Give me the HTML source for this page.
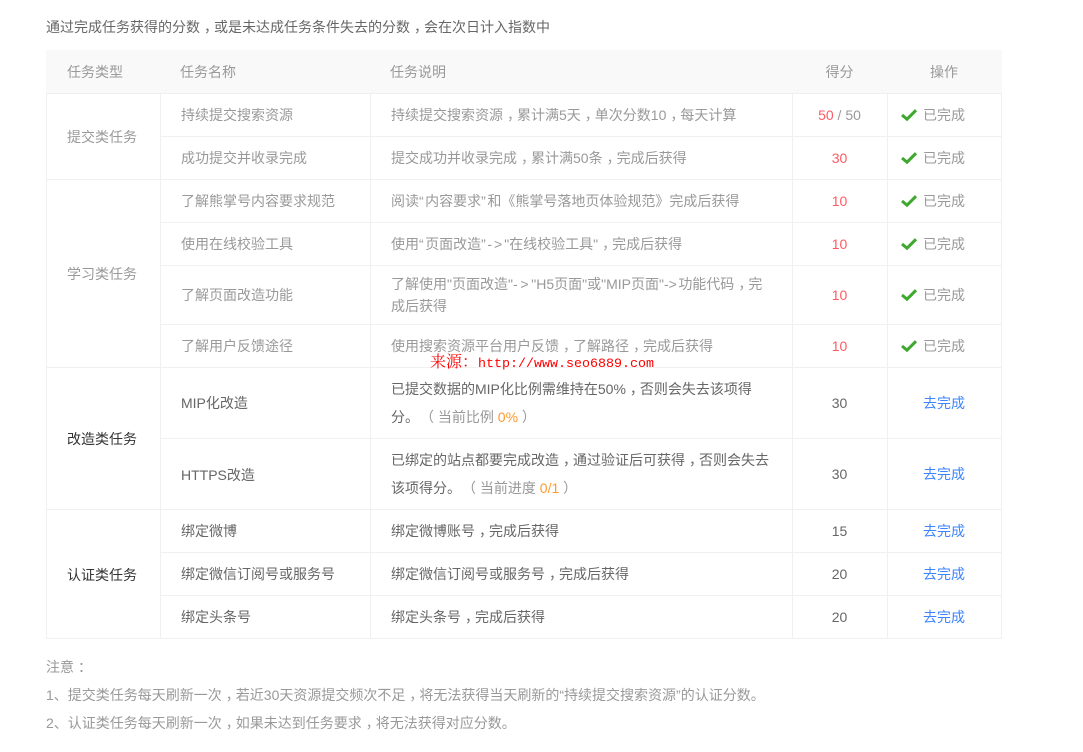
<!DOCTYPE html>
<html lang="zh-CN">
<head>
<meta charset="utf-8">
<title>任务</title>
<style>
html,body{margin:0;padding:0;background:#fff;width:1083px;height:752px;overflow:hidden}
body{position:relative;font-family:"Liberation Sans","Noto Sans CJK SC",sans-serif;font-size:14px;color:#999}
.t{position:absolute;line-height:20px;height:20px;white-space:nowrap}
.c{text-align:center}
.h{position:absolute;height:1px;background:#f0f0f0}
.v{position:absolute;width:1px;background:#f0f0f0}
.d{color:#666}
.k{color:#333}
.r{color:#ff5a64}
.o{color:#ff9a2e}
.b{color:#3d84ff}
.ck{position:absolute;width:16px;height:13px}
u{text-decoration:none;position:relative;left:4px}
.q{letter-spacing:1.5px}
.p{margin-left:8px;color:#999}
.wm{position:absolute;left:430px;top:352px;line-height:18px;color:#f00;white-space:nowrap;font-family:"Liberation Mono","Noto Serif CJK SC",serif;font-size:13.33px}
.wm b{font-weight:400;font-size:16px;font-family:"Noto Serif CJK SC",serif}
</style>
</head>
<body>
<div class="t d" style="left:46px;top:17px">通过完成任务获得的分数<u>，</u>或是未达成任务条件失去的分数<u>，</u>会在次日计入指数中</div>

<div style="position:absolute;left:46px;top:50px;width:956px;height:43px;background:#f9f9f9"></div>
<div class="t" style="left:67px;top:62px">任务类型</div>
<div class="t" style="left:180px;top:62px">任务名称</div>
<div class="t" style="left:390px;top:62px">任务说明</div>
<div class="t c" style="left:792px;width:95px;top:62px">得分</div>
<div class="t c" style="left:887px;width:114px;top:62px">操作</div>

<div class="h" style="left:46px;width:956px;top:93px"></div>
<div class="h" style="left:160px;width:842px;top:136px"></div>
<div class="h" style="left:46px;width:956px;top:179px"></div>
<div class="h" style="left:160px;width:842px;top:222px"></div>
<div class="h" style="left:160px;width:842px;top:265px"></div>
<div class="h" style="left:160px;width:842px;top:324px"></div>
<div class="h" style="left:46px;width:956px;top:367px"></div>
<div class="h" style="left:160px;width:842px;top:438px"></div>
<div class="h" style="left:46px;width:956px;top:509px"></div>
<div class="h" style="left:160px;width:842px;top:552px"></div>
<div class="h" style="left:160px;width:842px;top:595px"></div>
<div class="h" style="left:46px;width:956px;top:638px"></div>
<div class="v" style="left:46px;top:93px;height:546px"></div>
<div class="v" style="left:160px;top:93px;height:546px"></div>
<div class="v" style="left:370px;top:93px;height:546px"></div>
<div class="v" style="left:792px;top:93px;height:546px"></div>
<div class="v" style="left:887px;top:93px;height:546px"></div>
<div class="v" style="left:1001px;top:93px;height:546px"></div>

<div class="t" style="left:67px;top:127px">提交类任务</div>
<div class="t" style="left:67px;top:264px">学习类任务</div>
<div class="t k" style="left:67px;top:429px">改造类任务</div>
<div class="t k" style="left:67px;top:565px">认证类任务</div>

<div class="t" style="left:181px;top:105px">持续提交搜索资源</div>
<div class="t" style="left:181px;top:148px">成功提交并收录完成</div>
<div class="t" style="left:181px;top:191px">了解熊掌号内容要求规范</div>
<div class="t" style="left:181px;top:234px">使用在线校验工具</div>
<div class="t" style="left:181px;top:285px">了解页面改造功能</div>
<div class="t" style="left:181px;top:336px">了解用户反馈途径</div>
<div class="t d" style="left:181px;top:393px">MIP化改造</div>
<div class="t d" style="left:181px;top:465px">HTTPS改造</div>
<div class="t d" style="left:181px;top:521px">绑定微博</div>
<div class="t d" style="left:181px;top:564px">绑定微信订阅号或服务号</div>
<div class="t d" style="left:181px;top:607px">绑定头条号</div>

<div class="t" style="left:391px;top:105px">持续提交搜索资源<u>，</u>累计满5天<u>，</u>单次分数10<u>，</u>每天计算</div>
<div class="t" style="left:391px;top:148px">提交成功并收录完成<u>，</u>累计满50条<u>，</u>完成后获得</div>
<div class="t" style="left:391px;top:191px">阅读<span class="q">“</span>内容要求<span class="q">”</span>和《熊掌号落地页体验规范》完成后获得</div>
<div class="t" style="left:391px;top:234px">使用<span class="q">“</span>页面改造<span class="q">”</span><span style="letter-spacing:2px">-&gt;</span>"在线校验工具"<u>，</u>完成后获得</div>
<div class="t" style="left:391px;top:274px">了解使用"页面改造"<span style="letter-spacing:2.75px">-&gt;</span>"H5页面"或"MIP页面"-<span style="letter-spacing:1.5px">&gt;</span>功能代码<u>，</u>完</div>
<div class="t" style="left:391px;top:296px">成后获得</div>
<div class="t" style="left:391px;top:336px">使用搜索资源平台用户反馈<u>，</u>了解路径<u>，</u>完成后获得</div>
<div class="t d" style="left:391px;top:379px">已提交数据的MIP化比例需维持在50%<u>，</u>否则会失去该项得</div>
<div class="t d" style="left:391px;top:407px">分。<span class="p">（ 当前比例 <span class="o">0%</span> ）</span></div>
<div class="t d" style="left:391px;top:450px">已绑定的站点都要完成改造<u>，</u>通过验证后可获得<u>，</u>否则会失去</div>
<div class="t d" style="left:391px;top:478px">该项得分。<span class="p">（ 当前进度 <span class="o">0/1</span> ）</span></div>
<div class="t d" style="left:391px;top:521px">绑定微博账号<u>，</u>完成后获得</div>
<div class="t d" style="left:391px;top:564px">绑定微信订阅号或服务号<u>，</u>完成后获得</div>
<div class="t d" style="left:391px;top:607px">绑定头条号<u>，</u>完成后获得</div>

<div class="t c" style="left:792px;width:95px;top:105px"><span class="r">50</span> / 50</div>
<div class="t c r" style="left:792px;width:95px;top:148px">30</div>
<div class="t c r" style="left:792px;width:95px;top:191px">10</div>
<div class="t c r" style="left:792px;width:95px;top:234px">10</div>
<div class="t c r" style="left:792px;width:95px;top:285px">10</div>
<div class="t c r" style="left:792px;width:95px;top:336px">10</div>
<div class="t c d" style="left:792px;width:95px;top:393px">30</div>
<div class="t c d" style="left:792px;width:95px;top:464px">30</div>
<div class="t c d" style="left:792px;width:95px;top:521px">15</div>
<div class="t c d" style="left:792px;width:95px;top:564px">20</div>
<div class="t c d" style="left:792px;width:95px;top:607px">20</div>

<svg class="ck" style="left:901px;top:109px" viewBox="0 0 16 13"><path d="M1 6L6 10.2L15 1.2" fill="none" stroke="#3fa82f" stroke-width="3"/></svg>
<svg class="ck" style="left:901px;top:152px" viewBox="0 0 16 13"><path d="M1 6L6 10.2L15 1.2" fill="none" stroke="#3fa82f" stroke-width="3"/></svg>
<svg class="ck" style="left:901px;top:195px" viewBox="0 0 16 13"><path d="M1 6L6 10.2L15 1.2" fill="none" stroke="#3fa82f" stroke-width="3"/></svg>
<svg class="ck" style="left:901px;top:238px" viewBox="0 0 16 13"><path d="M1 6L6 10.2L15 1.2" fill="none" stroke="#3fa82f" stroke-width="3"/></svg>
<svg class="ck" style="left:901px;top:289px" viewBox="0 0 16 13"><path d="M1 6L6 10.2L15 1.2" fill="none" stroke="#3fa82f" stroke-width="3"/></svg>
<svg class="ck" style="left:901px;top:340px" viewBox="0 0 16 13"><path d="M1 6L6 10.2L15 1.2" fill="none" stroke="#3fa82f" stroke-width="3"/></svg>
<div class="t" style="left:923px;top:105px">已完成</div>
<div class="t" style="left:923px;top:148px">已完成</div>
<div class="t" style="left:923px;top:191px">已完成</div>
<div class="t" style="left:923px;top:234px">已完成</div>
<div class="t" style="left:923px;top:285px">已完成</div>
<div class="t" style="left:923px;top:336px">已完成</div>
<div class="t b" style="left:923px;top:393px">去完成</div>
<div class="t b" style="left:923px;top:464px">去完成</div>
<div class="t b" style="left:923px;top:521px">去完成</div>
<div class="t b" style="left:923px;top:564px">去完成</div>
<div class="t b" style="left:923px;top:607px">去完成</div>

<div class="wm"><b>来源：</b>http://www.seo6889.com</div>

<div class="t" style="left:46px;top:657px">注意<u>：</u></div>
<div class="t" style="left:46px;top:685px">1、提交类任务每天刷新一次<u>，</u>若近30天资源提交频次不足<u>，</u>将无法获得当天刷新的“持续提交搜索资源”的认证分数。</div>
<div class="t" style="left:46px;top:713px">2、认证类任务每天刷新一次<u>，</u>如果未达到任务要求<u>，</u>将无法获得对应分数。</div>
</body>
</html>
